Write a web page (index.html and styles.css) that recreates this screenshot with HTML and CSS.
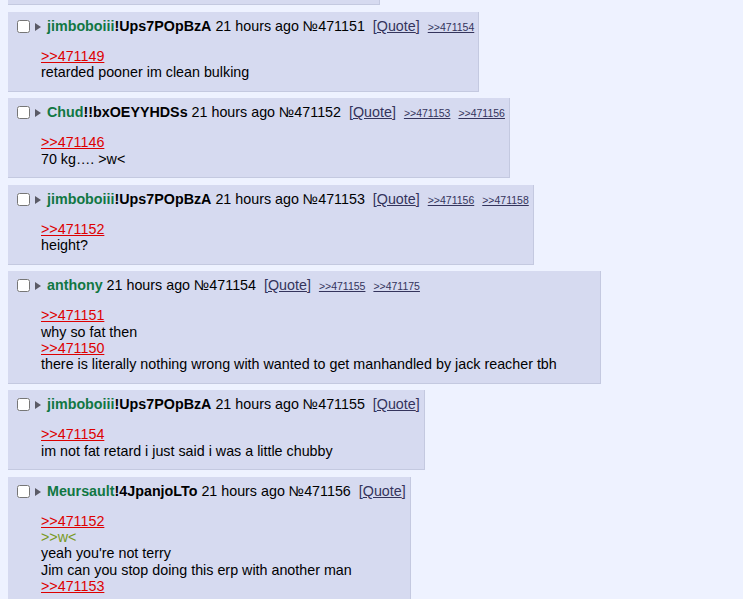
FILE: index.html
```html
<!DOCTYPE html>
<html>
<head>
<meta charset="utf-8">
<link rel="stylesheet" href="styles.css">
</head>
<body>
<div class="thread">
  <div class="post post-tail"></div>

  <div class="post">
    <div class="post-head"><input type="checkbox" class="chk"><span class="arrow"></span><span class="name">jimboboiii</span><span class="trip">!Ups7POpBzA</span> 21 hours ago №471151 <a class="quote-btn">[<span class="u">Quote</span>]</a> <a class="backlink">&gt;&gt;471154</a></div>
    <blockquote class="post-body"><a class="ref">&gt;&gt;471149</a><br>retarded pooner im clean bulking</blockquote>
  </div>

  <div class="post">
    <div class="post-head"><input type="checkbox" class="chk"><span class="arrow"></span><span class="name">Chud</span><span class="trip">!!bxOEYYHDSs</span> 21 hours ago №471152 <a class="quote-btn">[<span class="u">Quote</span>]</a> <a class="backlink">&gt;&gt;471153</a> <a class="backlink">&gt;&gt;471156</a></div>
    <blockquote class="post-body"><a class="ref">&gt;&gt;471146</a><br>70 kg…. &gt;w&lt;</blockquote>
  </div>

  <div class="post">
    <div class="post-head"><input type="checkbox" class="chk"><span class="arrow"></span><span class="name">jimboboiii</span><span class="trip">!Ups7POpBzA</span> 21 hours ago №471153 <a class="quote-btn">[<span class="u">Quote</span>]</a> <a class="backlink">&gt;&gt;471156</a> <a class="backlink">&gt;&gt;471158</a></div>
    <blockquote class="post-body"><a class="ref">&gt;&gt;471152</a><br>height?</blockquote>
  </div>

  <div class="post">
    <div class="post-head"><input type="checkbox" class="chk"><span class="arrow"></span><span class="name">anthony</span> 21 hours ago №471154 <a class="quote-btn">[<span class="u">Quote</span>]</a> <a class="backlink">&gt;&gt;471155</a> <a class="backlink">&gt;&gt;471175</a></div>
    <blockquote class="post-body"><a class="ref">&gt;&gt;471151</a><br>why so fat then<br><a class="ref">&gt;&gt;471150</a><br>there is literally nothing wrong with wanted to get manhandled by jack reacher tbh</blockquote>
  </div>

  <div class="post">
    <div class="post-head"><input type="checkbox" class="chk"><span class="arrow"></span><span class="name">jimboboiii</span><span class="trip">!Ups7POpBzA</span> 21 hours ago №471155 <a class="quote-btn">[<span class="u">Quote</span>]</a></div>
    <blockquote class="post-body"><a class="ref">&gt;&gt;471154</a><br>im not fat retard i just said i was a little chubby</blockquote>
  </div>

  <div class="post post-last">
    <div class="post-head"><input type="checkbox" class="chk"><span class="arrow"></span><span class="name">Meursault</span><span class="trip">!4JpanjoLTo</span> 21 hours ago №471156 <a class="quote-btn">[<span class="u">Quote</span>]</a></div>
    <blockquote class="post-body"><a class="ref">&gt;&gt;471152</a><br><span class="green">&gt;&gt;w&lt;</span><br>yeah you're not terry<br>Jim can you stop doing this erp with another man<br><a class="ref">&gt;&gt;471153</a></blockquote>
  </div>
</div>
</body>
</html>
```

FILE: styles.css
```css
html, body {
  margin: 0;
  padding: 0;
  background: #eef2ff;
  overflow: hidden;
}

body {
  font-family: "Liberation Sans", Arial, sans-serif;
  font-size: 14.3px;
  color: #000;
  height: 599px;
}

.thread {
  display: flex;
  flex-direction: column;
  align-items: flex-start;
  gap: 6.75px;
  padding-left: 8px;
  height: 599px;
  overflow: hidden;
}

.post {
  background: #d6daf0;
  border-right: 1px solid #c4c9e0;
  border-bottom: 1px solid #c4c9e0;
  padding: 5px 4px 0 0;
  flex-shrink: 0;
}

.post-last {
  padding-bottom: 30px;
}

.post-tail {
  width: 372px;
  height: 5.3px;
  padding: 0;
  box-sizing: border-box;
}

.post-head {
  line-height: 18px;
  height: 18px;
  white-space: nowrap;
}

.chk {
  width: 13px;
  height: 13px;
  margin: 0 5px 0 9px;
  vertical-align: -2px;
}

.arrow {
  display: inline-block;
  width: 0;
  height: 0;
  border-left: 6px solid #5a5a66;
  border-top: 4px solid transparent;
  border-bottom: 4px solid transparent;
  margin-right: 6px;
  vertical-align: 0px;
}

.name {
  color: #117743;
  font-weight: bold;
}

.trip {
  font-weight: bold;
}

.quote-btn {
  color: #34345c;
  margin-left: 4px;
}

.quote-btn .u {
  text-decoration: underline;
}

.backlink {
  color: #34345c;
  font-size: 10.5px;
  text-decoration: underline;
  margin-left: 4px;
}

.post-body {
  margin: 13px 39px 10px 33px;
  line-height: 16.33px;
}

.ref {
  color: #dd0000;
  text-decoration: underline;
}

.green {
  color: #789922;
}
```
